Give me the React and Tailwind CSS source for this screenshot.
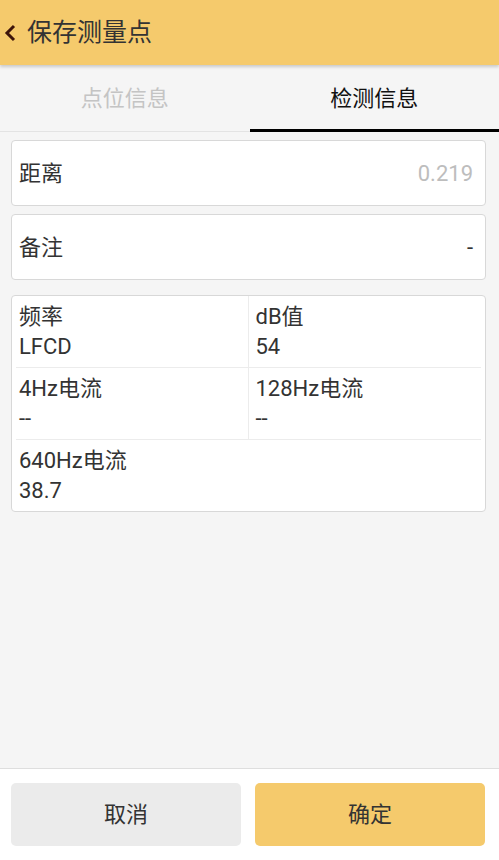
import React from "react";

const font = { fontFamily: '"Roboto", "Noto Sans CJK SC", sans-serif' };

const Field = ({ label, value, valueClass }) => (
  <div className="ml-[11px] mr-[13px] h-[66px] bg-white border border-[#d8d8d8] rounded-[4px] flex items-center justify-between pl-[7px] pr-[12px]">
    <span className="text-[22px] text-[#333]">{label}</span>
    <span className={"text-[22px] " + valueClass}>{value}</span>
  </div>
);

const Cell = ({ label, value, className }) => (
  <div className={"h-[71px] flex flex-col px-[3px] pt-[6px] " + className}>
    <span className="text-[22px] leading-[30px] text-[#333]">{label}</span>
    <span className="text-[22px] leading-[30px] text-[#333]">{value}</span>
  </div>
);

const App = () => {
  return (
    <div className="w-[499px] h-[860px] bg-[#f5f5f5] flex flex-col" style={font}>
      <header className="h-[65px] bg-[#f5ca6c] flex items-center shadow-[0_2px_3px_rgba(0,0,0,0.18)] relative z-10">
        <svg width="14" height="18" viewBox="0 0 14 18" className="ml-[4px] mr-[9px]">
          <path d="M10 2 L3 9 L10 16" stroke="#3d140a" strokeWidth="3" fill="none" />
        </svg>
        <h1 className="text-[25px] text-[#333]">保存测量点</h1>
      </header>

      <div className="flex h-[67px] border-b border-[#e3e3e3]">
        <div className="flex-1 flex items-center justify-center text-[22px] text-[#c4c4c4]">点位信息</div>
        <div className="flex-1 flex items-center justify-center text-[22px] text-[#111] border-b-[3px] border-black mb-[-1px] pt-[3px]">
          检测信息
        </div>
      </div>

      <div className="flex flex-col gap-[8px] mt-[8px]">
        <Field label="距离" value="0.219" valueClass="text-[#bdbdbd]" />
        <Field label="备注" value="-" valueClass="text-[#333]" />
      </div>

      <div className="ml-[11px] mr-[13px] mt-[15px] bg-white border border-[#d8d8d8] rounded-[4px] px-[4px]">
        <div className="grid grid-cols-2 border-b border-[#ececec]">
          <Cell label="频率" value="LFCD" className="border-r border-[#ececec]" />
          <Cell label="dB值" value="54" className="pl-[7px]" />
        </div>
        <div className="grid grid-cols-2 border-b border-[#ececec]">
          <Cell label="4Hz电流" value="--" className="border-r border-[#ececec]" />
          <Cell label="128Hz电流" value="--" className="pl-[7px]" />
        </div>
        <Cell label="640Hz电流" value="38.7" />
      </div>

      <div className="flex-1" />

      <footer className="h-[92px] bg-white border-t border-[#dedede] flex gap-[14px] pl-[11px] pr-[14px] pt-[14px]">
        <button className="flex-1 h-[63px] bg-[#ebebeb] rounded-[5px] text-[22px] text-[#333]">取消</button>
        <button className="flex-1 h-[63px] bg-[#f5ca6c] rounded-[5px] text-[22px] text-[#333]">确定</button>
      </footer>
    </div>
  );
};

export default App;
